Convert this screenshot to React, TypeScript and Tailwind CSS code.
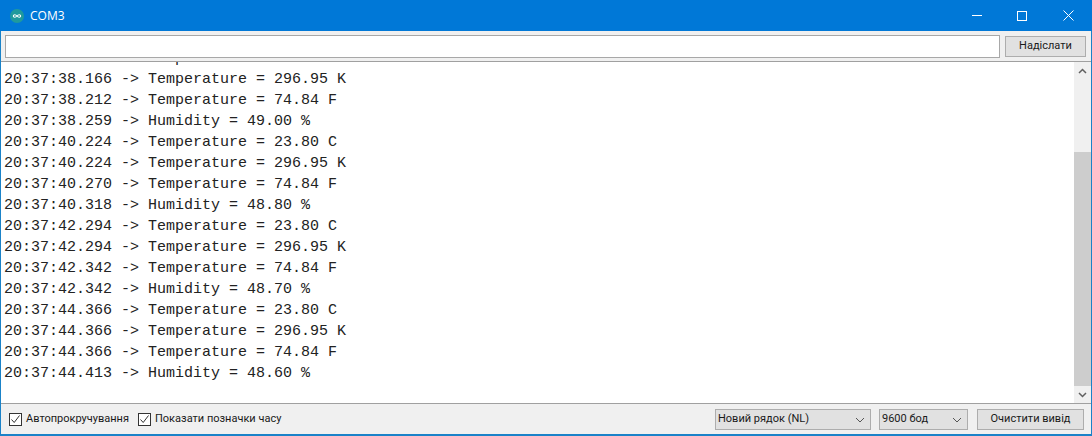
const lines = [
  '20:37:38.166 -> Temperature = 23.80 C',
  '20:37:38.166 -> Temperature = 296.95 K',
  '20:37:38.212 -> Temperature = 74.84 F',
  '20:37:38.259 -> Humidity = 49.00 %',
  '20:37:40.224 -> Temperature = 23.80 C',
  '20:37:40.224 -> Temperature = 296.95 K',
  '20:37:40.270 -> Temperature = 74.84 F',
  '20:37:40.318 -> Humidity = 48.80 %',
  '20:37:42.294 -> Temperature = 23.80 C',
  '20:37:42.294 -> Temperature = 296.95 K',
  '20:37:42.342 -> Temperature = 74.84 F',
  '20:37:42.342 -> Humidity = 48.70 %',
  '20:37:44.366 -> Temperature = 23.80 C',
  '20:37:44.366 -> Temperature = 296.95 K',
  '20:37:44.366 -> Temperature = 74.84 F',
  '20:37:44.413 -> Humidity = 48.60 %',
]

function Check({ label }: { label: string }) {
  return (
    <div className="flex items-center gap-[4px]">
      <div className="flex h-[13px] w-[13px] items-center justify-center border border-[#333] bg-white">
        <svg width="11" height="11" viewBox="0 0 11 11" fill="none" stroke="#333" strokeWidth="1">
          <path d="M1.5 5.5 L4.2 8.5 L9.5 1.5" />
        </svg>
      </div>
      <span>{label}</span>
    </div>
  )
}

function Select({ label, className }: { label: string; className: string }) {
  return (
    <div className={`flex h-[21px] items-center justify-between border border-[#adadad] bg-[#e1e1e1] pl-[2px] pr-[3px] ${className}`}>
      <span>{label}</span>
      <svg width="10" height="6" viewBox="0 0 10 6" fill="none" stroke="#555" strokeWidth="1" className="mr-[2px] mt-[2px]">
        <path d="M1 1 L5 5 L9 1" />
      </svg>
    </div>
  )
}

export default function App() {
  return (
    <div className="flex h-[436px] w-[1092px] flex-col border border-b-2 border-[#1a82c8] border-t-0 bg-[#f0f0f0] font-['Roboto',sans-serif] text-[11px] text-[#1a1a1a]">
      <div className="-mx-px flex h-[31px] shrink-0 items-center bg-[#0078d7] pl-[10px] text-white">
        <svg width="14" height="14" viewBox="0 0 14 14" className="shrink-0">
          <circle cx="7" cy="7" r="7" fill="#1f9a9d" />
          <path d="M7 7 C5.8 5.4 3.4 5.3 3.4 7 C3.4 8.7 5.8 8.6 7 7 C8.2 5.4 10.6 5.3 10.6 7 C10.6 8.7 8.2 8.6 7 7 Z" fill="none" stroke="#fff" strokeWidth="1.1" />
        </svg>
        <span className="ml-[6px] font-['Open_Sans',sans-serif] text-[12px]">COM3</span>
        <div className="ml-auto flex items-center">
          <div className="flex h-[31px] w-[45px] items-center justify-center">
            <div className="h-px w-[10px] bg-white" />
          </div>
          <div className="flex h-[31px] w-[46px] items-center justify-center">
            <div className="h-[10px] w-[10px] border border-white" />
          </div>
          <div className="flex h-[31px] w-[47px] items-center justify-center">
            <svg width="11" height="11" viewBox="0 0 11 11" stroke="#fff" strokeWidth="1">
              <path d="M0.5 0.5 L10.5 10.5 M10.5 0.5 L0.5 10.5" />
            </svg>
          </div>
        </div>
      </div>

      <div className="flex h-[31px] shrink-0 items-center border-b border-[#a0a0a0] pl-[4px] pr-[5px]">
        <div className="h-[23px] w-[995px] border border-[#a8a8a8] bg-white" />
        <button className="ml-[5px] h-[21px] w-[81px] border border-[#adadad] bg-[#e1e1e1] text-[#1a1a1a]">Надіслати</button>
      </div>

      <div className="flex min-h-0 flex-1 bg-white">
        <div className="min-w-0 flex-1 overflow-hidden">
          <div className="-mt-[14px] whitespace-pre pl-[3px] font-['Liberation_Mono',monospace] text-[15px] leading-[21px] text-[#222]">
            {lines.map((line, i) => (
              <div key={i}>{line}</div>
            ))}
          </div>
        </div>
        <div className="flex w-[17px] shrink-0 flex-col bg-[#f0f0f0]">
          <div className="flex h-[17px] items-center justify-center">
            <svg width="9" height="6" viewBox="0 0 9 6" fill="none" stroke="#606060" strokeWidth="1.5">
              <path d="M1 5 L4.5 1.5 L8 5" />
            </svg>
          </div>
          <div className="flex-1 pt-[73px]">
            <div className="h-full bg-[#cdcdcd]" />
          </div>
          <div className="flex h-[17px] items-center justify-center">
            <svg width="9" height="6" viewBox="0 0 9 6" fill="none" stroke="#606060" strokeWidth="1.5">
              <path d="M1 1 L4.5 4.5 L8 1" />
            </svg>
          </div>
        </div>
      </div>

      <div className="flex h-[31px] shrink-0 items-center border-t border-[#a0a0a0] pl-[8px] pr-[7px]">
        <div className="flex items-center gap-[9px]">
          <Check label="Автопрокручування" />
          <Check label="Показати позначки часу" />
        </div>
        <div className="ml-auto flex items-center">
          <Select label="Новий рядок (NL)" className="w-[156px]" />
          <Select label="9600 бод" className="ml-[8px] w-[89px]" />
          <button className="ml-[9px] h-[21px] w-[107px] border border-[#adadad] bg-[#e1e1e1]">Очистити вивід</button>
        </div>
      </div>
    </div>
  )
}
